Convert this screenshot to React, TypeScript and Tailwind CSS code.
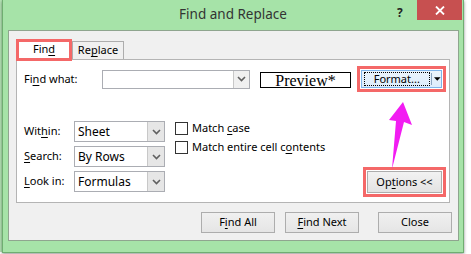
import React from "react";

const U = ({ children }: { children: React.ReactNode }) => (
  <span className="underline underline-offset-[2px] decoration-[1px]">{children}</span>
);

const Chevron = () => (
  <svg width="9" height="6" viewBox="0 0 9 6">
    <path d="M1 1 L4.5 4.5 L8 1" fill="none" stroke="#606060" strokeWidth="1.6" />
  </svg>
);

const Select = ({ value }: { value: string }) => (
  <div className="flex w-[91px] h-[21px] border border-[#abadb3] bg-white">
    <div className="flex-1 flex items-center pl-[3px] text-[12px] text-black">{value}</div>
    <div className="w-[17px] h-full bg-[#e6e6e6] border-l border-[#c8c8c8] flex items-center justify-center">
      <Chevron />
    </div>
  </div>
);

const Check = ({ children }: { children: React.ReactNode }) => (
  <div className="flex items-center h-[13px]">
    <div className="w-[13px] h-[13px] border border-[#333] bg-white" />
    <span className="ml-[4px] text-[11px] text-black">{children}</span>
  </div>
);

const Btn = ({ children }: { children: React.ReactNode }) => (
  <div className="w-[74px] h-[21px] border border-[#adadad] bg-[linear-gradient(#f0f0f0,#e5e5e5)] flex items-center justify-center text-[11px] text-black">
    {children}
  </div>
);

export default function App() {
  return (
    <div className="relative w-[471px] h-[254px] bg-white overflow-hidden flex font-['Noto_Sans',sans-serif]">
      <div className="w-[2px] h-[252px] bg-[#b5e6b6]" />
      <div className="w-[462px] h-[253px] bg-[#a6e3a8] border-x border-b border-[#6fae71] shadow-[0_1px_3px_rgba(0,0,0,0.45)] flex flex-col">
        {/* title bar */}
        <div className="relative h-[30px] flex items-center justify-center">
          <span className="text-[13.5px] text-[#333] mt-[-1px]">Find and Replace</span>
          <span className="absolute left-[394px] top-[4px] text-[12px] font-bold text-[#222]">?</span>
          <div className="absolute right-[1px] top-0 w-[45px] h-[20px] bg-[#c75050] flex items-center justify-center">
            <svg width="10" height="9" viewBox="0 0 10 9">
              <path d="M1 0.5 L9 8.5 M9 0.5 L1 8.5" stroke="#fff" strokeWidth="1.8" />
            </svg>
          </div>
        </div>
        {/* client */}
        <div className="ml-[5px] w-[451px] h-[211px] bg-[#f0f0f0] border border-[#8fa58f] flex flex-col pl-[7px] pt-[8px]">
          {/* tabs */}
          <div className="flex items-end h-[20px]">
            <div className="relative z-10 w-[56px] h-[22px] -mb-[2px] border-[3px] border-[#f46868] bg-white flex items-center justify-center text-[11px] text-black">
              <span className="mt-[-1px]">Fin<U>d</U></span>
            </div>
            <div className="w-[52px] h-[18px] border border-b-0 border-[#adadad] bg-[#f0f0f0] flex items-center justify-center text-[11px] text-black">
              Re<U>p</U>lace
            </div>
          </div>
          {/* panel */}
          <div className="w-[434px] h-[144px] border border-[#b4b4b4] bg-white flex flex-col">
            <div className="mt-[6px] h-[26px] flex items-center">
              <span className="ml-[7px] w-[78px] text-[11px] text-black">
                Fi<U>n</U>d what:
              </span>
              <div className="flex w-[148px] h-[19px] border border-[#abadb3] bg-white">
                <div className="flex-1" />
                <div className="w-[16px] h-full bg-[#f0f0f0] border-l border-[#c8c8c8] flex items-center justify-center">
                  <Chevron />
                </div>
              </div>
              <div className="ml-[10px] w-[91px] h-[16px] mt-[2px] border border-black flex items-center justify-center font-['Liberation_Serif','Times_New_Roman',serif] font-normal text-[16px] text-black leading-none">
                <span className="mt-[1px]">Preview*</span>
              </div>
              <div className="ml-[6px] w-[89px] h-[26px] border-[3px] border-[#f46868] p-[1px]">
                <div className="w-full h-full border border-[#7eb4ea] bg-[linear-gradient(#ecf4fc,#dcecfc)] flex items-center pl-[2px]">
                  <div className="w-[70px] h-[14px] border border-dotted border-black flex items-center justify-center text-[11px] text-black">
                    Format...
                  </div>
                  <div className="ml-[1px] w-[1px] h-[12px] bg-[#8aa4c0]" />
                  <svg className="ml-[3px]" width="7" height="4" viewBox="0 0 7 4">
                    <path d="M0 0 L7 0 L3.5 4 Z" fill="#000" />
                  </svg>
                </div>
              </div>
            </div>
            <div className="mt-[29px] flex">
              <div className="ml-[7px] flex flex-col gap-[4px]">
                <div className="flex items-center">
                  <span className="w-[50px] text-[11px] text-black">
                    Wit<U>h</U>in:
                  </span>
                  <Select value="Sheet" />
                </div>
                <div className="flex items-center">
                  <span className="w-[50px] text-[11px] text-black">
                    <U>S</U>earch:
                  </span>
                  <Select value="By Rows" />
                </div>
                <div className="flex items-center">
                  <span className="w-[50px] text-[11px] text-black">
                    <U>L</U>ook in:
                  </span>
                  <Select value="Formulas" />
                </div>
              </div>
              <div className="ml-[10px] mt-[1px] flex flex-col gap-[6px]">
                <Check>
                  Match <U>c</U>ase
                </Check>
                <Check>
                  Match entire cell c<U>o</U>ntents
                </Check>
              </div>
              <div className="ml-auto mr-[3px] mt-[46px] w-[83px] h-[30px] border-[3px] border-[#f46868] p-[1px]">
                <div className="w-full h-full border border-[#adadad] bg-[linear-gradient(#f2f2f2,#e3e3e3)] flex items-center justify-center text-[11px] text-black">
                  Op<U>t</U>ions &lt;&lt;
                </div>
              </div>
            </div>
          </div>
          {/* bottom buttons */}
          <div className="mt-[9px] flex justify-end pr-[6px]">
            <Btn>
              F<U>i</U>nd All
            </Btn>
            <div className="ml-[10px]">
              <Btn>
                <U>F</U>ind Next
              </Btn>
            </div>
            <div className="ml-[19px]">
              <Btn>Close</Btn>
            </div>
          </div>
        </div>
      </div>
      <svg className="absolute left-0 top-0 pointer-events-none" width="471" height="254" viewBox="0 0 471 254">
        <polygon points="403,102 412,125 404,122 392,169 396,121 389,120" fill="#f21cf2" />
      </svg>
    </div>
  );
}
